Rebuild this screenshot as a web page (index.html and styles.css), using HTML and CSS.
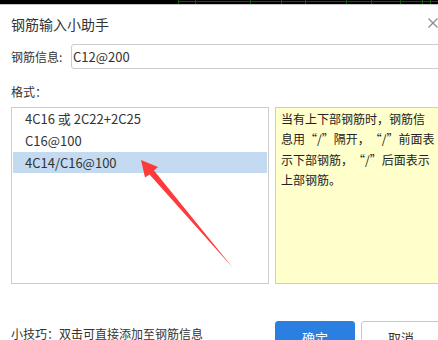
FILE: index.html
```html
<!DOCTYPE html>
<html lang="zh-CN">
<head>
    <meta charset="utf-8">
    <title>钢筋输入小助手</title>
    <link rel="stylesheet" href="styles.css">
</head>
<body>
    <div class="topbar">
        <svg width="438" height="4" viewBox="0 0 438 4">
            <rect x="0" y="0" width="438" height="4" fill="#000"/>
            <rect x="178" y="1" width="260" height="1" fill="#0b5e0b"/>
            <g fill="#0b5e0b">
                <rect x="178" y="0" width="1" height="4"/>
                <rect x="195" y="0" width="1" height="4"/>
                <rect x="250" y="0" width="1" height="4"/>
                <rect x="281" y="0" width="1" height="4"/>
                <rect x="305" y="0" width="1" height="4"/>
                <rect x="346" y="0" width="1" height="4"/>
                <rect x="371" y="0" width="1" height="4"/>
                <rect x="400" y="0" width="1" height="4"/>
                <rect x="422" y="0" width="1" height="4"/>
                <rect x="430" y="0" width="1" height="4"/>
            </g>
        </svg>
    </div>

    <div class="dialog">
        <div class="title-row">
            <span class="title">钢筋输入小助手</span>
            <svg class="close" width="10" height="10" viewBox="0 0 10 10">
                <path d="M0.5 0.5 L9.5 9.5 M9.5 0.5 L0.5 9.5" stroke="#8a8a8a" stroke-width="1.2"/>
            </svg>
        </div>

        <div class="field-row">
            <label for="info">钢筋信息:</label>
            <input type="text" id="info" value="C12@200">
        </div>

        <div class="section-label">格式：</div>

        <div class="panels">
            <ul class="format-list">
                <li class="item">4C16 或 2C22+2C25</li>
                <li class="item">C16@100</li>
                <li class="item selected">4C14/C16@100</li>
            </ul>
            <div class="hint">
                当有上下部钢筋时，钢筋信<br>
                息用<span class="lq">“</span>/<span class="rq">”</span>隔开，<span class="lq">“</span>/<span class="rq">”</span>前面表<br>
                示下部钢筋，<span class="lq">“</span>/<span class="rq">”</span>后面表示<br>
                上部钢筋。
            </div>
        </div>

        <div class="footer">
            <span class="tip">小技巧：双击可直接添加至钢筋信息</span>
            <div class="buttons">
                <button type="button" class="btn ok">确定</button>
                <button type="button" class="btn cancel">取消</button>
            </div>
        </div>
    </div>

    <svg class="arrow" width="438" height="340" viewBox="0 0 438 340">
        <polygon points="141,160 158,167 154,170.5 233,268 149.5,174.5 145,177.5" fill="#ff3a3a"/>
    </svg>
</body>
</html>
```

FILE: styles.css
```css
body {
    margin: 0;
    width: 438px;
    height: 340px;
    overflow: hidden;
    position: relative;
    background-color: #fff;
    color: #333;
    font-family: "Noto Sans CJK SC", "Noto Sans", sans-serif;
    font-size: 12px;
}

.topbar {
    height: 4px;
    border-bottom: 1px solid #c4c4c4;
}

.topbar svg {
    display: block;
}

.dialog {
    width: 449px;
    padding-left: 11px;
}

.title-row {
    height: 39px;
    display: flex;
    justify-content: space-between;
    align-items: flex-start;
}

.title {
    margin-top: 10px;
    font-size: 14px;
    line-height: 18px;
}

.close {
    margin-top: 13px;
    margin-right: 22px;
}

.field-row {
    display: flex;
    align-items: center;
    height: 25px;
}

.field-row label {
    width: 60px;
    line-height: 18px;
}

.field-row input {
    flex: 1;
    height: 25px;
    box-sizing: border-box;
    border: 1px solid #ccc;
    border-radius: 3px;
    padding: 0 1px;
    font-family: inherit;
    font-size: 13px;
    color: #333;
    outline: none;
}

.section-label {
    margin-top: 14px;
    margin-bottom: 6px;
    line-height: 18px;
}

.panels {
    display: flex;
    gap: 6px;
    height: 177px;
}

.format-list {
    list-style-type: none;
    margin: 0;
    padding: 0 1px;
    width: 258px;
    box-sizing: border-box;
    border: 1px solid #ccc;
    display: flex;
    flex-direction: column;
    gap: 1px;
}

.item {
    height: 21px;
    line-height: 21px;
    padding-left: 12px;
    font-size: 13px;
}

.item.selected {
    background-color: #c3daf1;
}

.hint {
    flex: 1;
    box-sizing: border-box;
    border: 1px solid #ccc;
    background-color: #ffffcc;
    padding: 1px 0 0 5px;
    line-height: 20.3px;
    white-space: nowrap;
    color: #222;
}

.lq, .rq {
    display: inline-block;
    width: 12px;
}

.lq {
    text-align: right;
}

.rq {
    text-align: left;
}

.footer {
    display: flex;
    align-items: flex-start;
    margin-top: 37px;
}

.tip {
    width: 264px;
    margin-top: 4px;
    line-height: 18px;
}

.buttons {
    display: flex;
    gap: 6px;
}

.btn {
    width: 80px;
    height: 32px;
    border-radius: 3px;
    font-family: inherit;
    font-size: 13px;
    padding: 0;
}

.ok {
    border: 1px solid #2b7fe0;
    background-color: #2b7fe0;
    color: #fff;
}

.cancel {
    border: 1px solid #c8c8c8;
    background-color: #fff;
    color: #333;
}

.arrow {
    position: absolute;
    left: 0;
    top: 0;
    pointer-events: none;
}
```
